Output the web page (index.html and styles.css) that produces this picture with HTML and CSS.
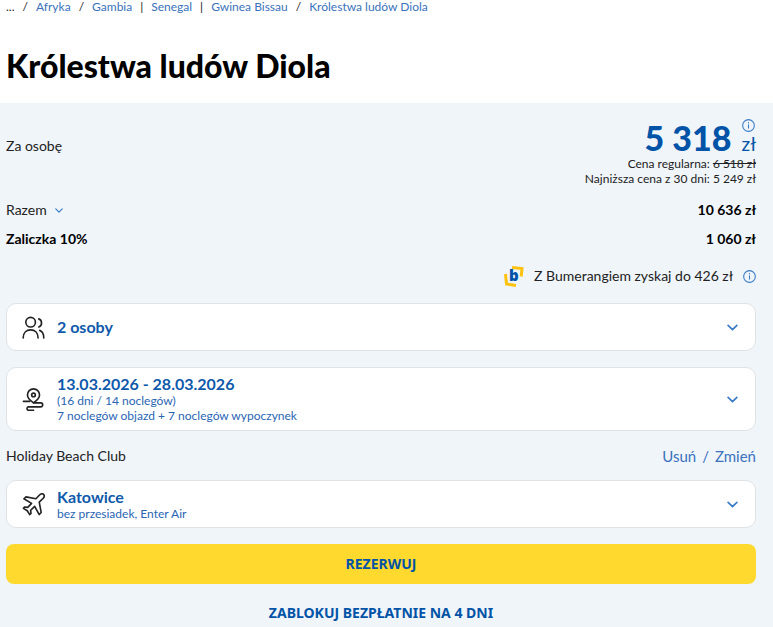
FILE: index.html
```html
<!DOCTYPE html>
<html lang="pl">
<head>
    <meta charset="UTF-8">
    <meta name="viewport" content="width=device-width, initial-scale=1.0">
    <title>Królestwa ludów Diola</title>
    <link rel="stylesheet" href="styles.css">
</head>
<body>
    <header class="page-header">
        <nav class="breadcrumbs">
            <span>...</span>
            <span>/</span>
            <a href="#">Afryka</a>
            <span>/</span>
            <a href="#">Gambia</a>
            <span>|</span>
            <a href="#">Senegal</a>
            <span>|</span>
            <a href="#">Gwinea Bissau</a>
            <span>/</span>
            <a href="#">Królestwa ludów Diola</a>
        </nav>
        <h1>Królestwa ludów Diola</h1>
    </header>

    <main class="offer">
        <section class="price">
            <span>Za osobę</span>
            <div class="price-box">
                <div class="price-main">
                    <strong>5 318</strong>
                    <div class="price-side">
                        <svg class="info" viewBox="0 0 12 12"><circle cx="6" cy="6" r="5.4"/><path d="M6 5.4v3M6 3.2v.4"/></svg>
                        <span>zł</span>
                    </div>
                </div>
                <div class="price-note">Cena regularna: <s>6 518 zł</s></div>
                <div class="price-note">Najniższa cena z 30 dni: 5 249 zł</div>
            </div>
        </section>

        <div class="row total">
            <button class="toggle" type="button">Razem
                <svg class="chevron" viewBox="0 0 10 6"><path d="M1 1l4 4 4-4"/></svg>
            </button>
            <b>10 636 zł</b>
        </div>
        <div class="row deposit">
            <b>Zaliczka 10%</b>
            <b>1 060 zł</b>
        </div>

        <div class="bonus">
            <svg class="bonus-logo" viewBox="0 0 20 22">
                <path class="mark" d="M8 2.500l10 1-.8 8M1.500 9l1 10 9.500 1.500"/>
                <text x="5" y="16">b</text>
            </svg>
            <span>Z Bumerangiem zyskaj do 426 zł</span>
            <svg class="info" viewBox="0 0 12 12"><circle cx="6" cy="6" r="5.4"/><path d="M6 5.4v3M6 3.2v.4"/></svg>
        </div>

        <button class="card" type="button">
            <svg class="icon" viewBox="0 0 24 24">
                <circle cx="9" cy="6.500" r="5"/>
                <path d="M1.200 23c0-5.500 3.300-8.500 7.800-8.500s7.800 3 7.800 8.500M17.500 3c1.900.7 2.900 2.200 2.900 4.300s-1 3.500-2.900 4.200M18.500 15c2.800 1 4.200 4 4.200 8"/>
            </svg>
            <span class="card-text">
                <span class="card-title">2 osoby</span>
            </span>
            <svg class="chevron" viewBox="0 0 10 6"><path d="M1 1l4 4 4-4"/></svg>
        </button>

        <button class="card card-date" type="button">
            <svg class="icon" viewBox="0 0 24 24">
                <path d="M12 15.500c-3.500-2.500-6.300-5-6.300-8.300a6.300 6.300 0 0 1 12.600 0c0 3.300-2.800 5.800-6.300 8.300z"/>
                <circle cx="12" cy="7.200" r="1.900"/>
                <path d="M1.500 14h6.500M12 15.500h7.500a2 2 0 0 1 0 4.200H6.500a1.900 1.900 0 0 0 0 3.600H12"/>
            </svg>
            <span class="card-text">
                <span class="card-title">13.03.2026 - 28.03.2026</span>
                <span class="card-sub">(16 dni / 14 noclegów)</span>
                <span class="card-sub">7 noclegów objazd + 7 noclegów wypoczynek</span>
            </span>
            <svg class="chevron" viewBox="0 0 10 6"><path d="M1 1l4 4 4-4"/></svg>
        </button>

        <div class="row hotel">
            <span>Holiday Beach Club</span>
            <div class="hotel-links">
                <a href="#">Usuń</a>
                <span>/</span>
                <a href="#">Zmień</a>
            </div>
        </div>

        <button class="card" type="button">
            <svg class="icon" viewBox="0 0 24 24">
                <path d="M22.500 1.500c-1.100-1-2.900-.6-4.200.6L14.500 6 4.200 4 2 6l8 4.800-4 4.200-3.300-.4-1.200 1.400 4 2.500 2.500 4 1.400-1.200L9 18l4.200-4L18 22.500l2-2.200-2-10.800 3.900-3.800c1.300-1.300 1.700-3.100.6-4.200z"/>
            </svg>
            <span class="card-text">
                <span class="card-title">Katowice</span>
                <span class="card-sub">bez przesiadek, Enter Air</span>
            </span>
            <svg class="chevron" viewBox="0 0 10 6"><path d="M1 1l4 4 4-4"/></svg>
        </button>

        <button class="btn-book" type="button">REZERWUJ</button>
        <button class="btn-hold" type="button">ZABLOKUJ BEZPŁATNIE NA 4 DNI</button>
    </main>
</body>
</html>
```
FILE: styles.css
```css
* {
    box-sizing: border-box;
}

body {
    margin: 0;
    font-family: Lato, sans-serif;
    font-size: 14px;
    line-height: 20px;
    color: #222;
    background: #fff;
}

a {
    color: #3a72bc;
    text-decoration: none;
}

button {
    padding: 0;
    border: none;
    background: none;
    font: inherit;
    color: inherit;
    cursor: pointer;
}

svg {
    flex: none;
    fill: none;
    stroke: #3a7bc8;
    stroke-linecap: round;
    stroke-linejoin: round;
}

.page-header {
    padding: 0 6px;
}

.breadcrumbs {
    display: flex;
    gap: 8px;
    font-size: 12px;
    line-height: 14px;
}

h1 {
    margin: 0;
    padding: 32px 0 17px;
    font-size: 32px;
    font-weight: 900;
    line-height: 40px;
    color: #000;
}

.offer {
    min-height: calc(100vh - 103px);
    padding: 16px 17px 0 6px;
    background: #f0f5fa;
}

.price {
    display: flex;
    justify-content: space-between;
    align-items: center;
}

.price > span {
    padding-bottom: 14px;
}

.price-main {
    display: flex;
    justify-content: flex-end;
    gap: 10px;
    height: 37px;
    color: #0053a6;
}

.price-main strong {
    font-size: 34px;
    font-weight: 900;
    line-height: 37px;
}

.price-side {
    display: flex;
    flex-direction: column;
    align-items: center;
    font-size: 19px;
    line-height: 24px;
}

.price-note {
    font-size: 12px;
    line-height: 15px;
    text-align: right;
}

.info {
    width: 13px;
    height: 13px;
}

.chevron {
    width: 11px;
    height: 7px;
    stroke-width: 1.5;
}

.row {
    display: flex;
    justify-content: space-between;
    align-items: center;
}

.row b {
    color: #000;
}

.total {
    margin-top: 14px;
}

.toggle {
    display: flex;
    align-items: center;
    gap: 8px;
}

.toggle .chevron {
    width: 8px;
    height: 5px;
}

.deposit {
    margin-top: 9px;
}

.bonus {
    display: flex;
    justify-content: flex-end;
    align-items: center;
    gap: 10px;
    margin: 16px 0;
}

.bonus-logo {
    width: 20px;
    height: 22px;
}

.bonus-logo .mark {
    stroke: #ffc20e;
    stroke-width: 3;
    stroke-linecap: butt;
    stroke-linejoin: miter;
}

.bonus-logo text {
    font-family: "Noto Sans", sans-serif;
    font-size: 15px;
    font-weight: 900;
    fill: #0053a6;
    stroke: none;
}

.card {
    display: flex;
    align-items: center;
    gap: 12px;
    width: 100%;
    min-height: 48px;
    padding: 0 17px 0 15px;
    border: 1px solid #e0e3e6;
    border-radius: 10px;
    background: #fff;
    text-align: left;
}

.card-date {
    min-height: 64px;
    margin-top: 16px;
}

.icon {
    width: 23px;
    height: 23px;
    stroke: #222;
    stroke-width: 1.7;
}

.card-text {
    display: flex;
    flex: 1;
    flex-direction: column;
}

.card-title {
    font-size: 16px;
    font-weight: 700;
    line-height: 18px;
    color: #0f59ab;
}

.card-sub {
    font-size: 12px;
    line-height: 15px;
    color: #2a65b3;
}

.hotel {
    margin: 15px 0 14px;
}

.hotel-links {
    display: flex;
    gap: 6px;
    font-size: 15px;
    color: #3a72bc;
}

.btn-book,
.btn-hold {
    display: block;
    width: 100%;
    font-family: "Noto Sans", sans-serif;
    font-weight: 700;
    color: #0053a6;
}

.btn-book {
    height: 40px;
    margin-top: 16px;
    border-radius: 8px;
    background: #ffd92e;
}

.btn-hold {
    margin-top: 19px;
}
```
